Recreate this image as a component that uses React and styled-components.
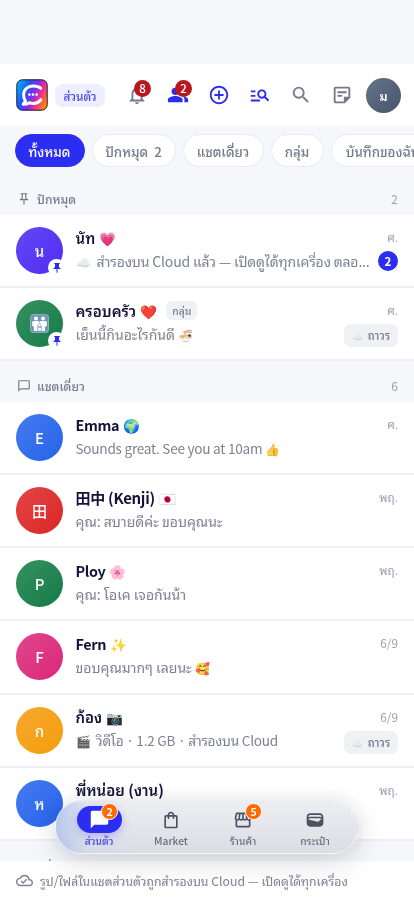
import React from 'react'
import styled, { createGlobalStyle } from 'styled-components'
import {
  MdAddCircleOutline,
  MdChatBubble,
  MdManageSearch,
  MdOutlineChatBubbleOutline,
  MdOutlineCloudDone,
  MdOutlineShoppingBag,
  MdOutlineNotifications,
  MdOutlinePushPin,
  MdOutlineStickyNote2,
  MdOutlineStorefront,
  MdPeopleAlt,
  MdPushPin,
  MdSearch,
  MdOutlineGroup,
  MdWallet,
} from 'react-icons/md'

const GlobalStyle = createGlobalStyle`
  * { box-sizing: border-box; }
  body {
    margin: 0;
    background: #f6f7fa;
    font-family: "Noto Sans CJK JP", "Noto Sans Thai Looped", "Noto Sans Thai", "Noto Sans", sans-serif;
    color: #13133a;
  }
`
const Screen = styled.div`
  width: 414px;
  height: 900px;
  padding-top: 64px;
  display: flex;
  flex-direction: column;
  overflow: hidden;
  position: relative;
`
const Header = styled.header`
  height: 62px;
  flex: none;
  background: #fff;
  display: flex;
  align-items: center;
  padding: 0 12px 0 16px;
`
const Mode = styled.span`
  width: 50px;
  height: 23px;
  margin: 0 11px 0 7px;
  border-radius: 8px;
  background: #eeeffe;
  color: #4a46e8;
  font-size: 11.8px;
  font-weight: 500;
  line-height: 23px;
  text-align: center;
  white-space: nowrap;
`
const Action = styled.span`
  width: 41px;
  height: 40px;
  display: flex;
  align-items: center;
  justify-content: center;
  position: relative;
  font-size: 22px;
  color: ${p => (p.$active ? '#2b2df0' : '#737a89')};
`
const ActionBadge = styled.span`
  position: absolute;
  left: 18px;
  top: 5px;
  width: 17px;
  height: 17px;
  border-radius: 50%;
  background: #b91720;
  color: #fff;
  font-size: 11.5px;
  font-weight: 500;
  line-height: 17px;
  text-align: center;
`
const Me = styled.span`
  width: 35px;
  height: 35px;
  margin-left: 4px;
  border-radius: 50%;
  background: linear-gradient(135deg, #64748b, #475569);
  color: #fff;
  font-size: 12.5px;
  font-weight: 600;
  line-height: 35px;
  text-align: center;
`
const Filters = styled.nav`
  height: 48px;
  flex: none;
  display: flex;
  gap: 7px;
  padding: 8px 0 0 14.5px;
  overflow: hidden;
`
const Chip = styled.span`
  flex: none;
  width: ${p => p.$width}px;
  height: 33px;
  border: 1.5px solid ${p => (p.$on ? '#2b2df0' : '#e8eaf0')};
  border-radius: 17px;
  background: ${p => (p.$on ? '#2b2df0' : '#fff')};
  color: ${p => (p.$on ? '#fff' : '#737a89')};
  font-size: 13.3px;
  font-weight: 500;
  line-height: 33px;
  text-align: center;
  white-space: pre;
`
const SectionHead = styled.div`
  height: 41px;
  flex: none;
  display: flex;
  align-items: center;
  padding: 8px 16px 0 17px;
  font-size: 12.1px;
  font-weight: 500;
  line-height: 20px;
  color: #737a89;

  svg { font-size: 14px; margin-right: 6px; }
`
const Count = styled.span`
  margin-left: auto;
  font-size: 12px;
  font-weight: 400;
  color: #989fae;
`
const Row = styled.div`
  height: 73.1px;
  flex: none;
  display: flex;
  padding: 0 16px;
  background: #fff;
  border-bottom: 2px solid #eff0f4;
`
const Avatar = styled.div`
  width: 47px;
  height: 47px;
  flex: none;
  margin: 12px 12.5px 0 0;
  border-radius: 50%;
  background: linear-gradient(135deg, ${p => p.$from}, ${p => p.$to});
  color: #fff;
  font-size: 15px;
  font-weight: 500;
  line-height: 47px;
  text-align: center;
  position: relative;

  > svg { display: block; margin: 14px auto 0; }
`
const PinBadge = styled.span`
  position: absolute;
  right: -2px;
  bottom: -2px;
  width: 17px;
  height: 17px;
  border-radius: 50%;
  background: #fff;
  color: #2b2df0;
  font-size: 12px;
  display: flex;
  align-items: center;
  justify-content: center;
`
const Body = styled.div`
  flex: 1;
  min-width: 0;
  padding-top: 10.8px;
`
const Name = styled.div`
  display: flex;
  align-items: center;
  height: 24px;
  font-size: ${p => p.$size || 15}px;
  letter-spacing: ${p => p.$track || 0}px;
  font-weight: 600;
  line-height: 24px;
  white-space: pre;
`
const NameEmoji = styled.span`
  margin-left: 4px;
  font-size: 13.5px;
  font-weight: 400;
  letter-spacing: 0;
`
const GroupTag = styled.span`
  height: 19px;
  margin-left: 9px;
  padding: 0 6px;
  border-radius: 6px;
  background: #f0f1f5;
  color: #737a89;
  font-size: 10.3px;
  font-weight: 500;
  line-height: 19px;
`
const Preview = styled.div`
  height: 24px;
  margin-top: -1px;
  font-size: ${p => p.$size || 14}px;
  letter-spacing: ${p => p.$track || 0}px;
  line-height: 24px;
  color: #7c8291;
  white-space: pre;
`
const SmallEmoji = styled.span`
  font-size: 12px;
  letter-spacing: 0;
  opacity: 0.85;
`
const Side = styled.div`
  flex: none;
  padding-top: 13px;
  margin-left: 10px;
  display: flex;
  flex-direction: column;
  align-items: flex-end;
`
const Time = styled.span`
  height: 18px;
  font-size: 11.8px;
  line-height: 18px;
  color: #989fae;
`
const Unread = styled.span`
  width: 20px;
  height: 20px;
  margin-top: 4.5px;
  border-radius: 50%;
  background: #2b2df0;
  color: #fff;
  font-size: 11.5px;
  font-weight: 700;
  line-height: 20px;
  text-align: center;
`
const Kept = styled.span`
  width: 54px;
  height: 23px;
  margin-top: 5px;
  border-radius: 7px;
  background: #f0f1f5;
  color: #737a89;
  font-size: 11.4px;
  font-weight: 500;
  line-height: 23px;
  text-align: center;
  white-space: pre;

  > span { font-size: 9px; }
`
const Footer = styled.footer`
  position: absolute;
  left: 0;
  right: 0;
  bottom: 0;
  height: 39px;
  background: #fff;
  display: flex;
  align-items: center;
  gap: 7px;
  padding: 0 16px;
  color: #7c8291;
  font-size: 12.25px;
  white-space: nowrap;

  svg { font-size: 17px; flex: none; }
`
const TabBar = styled.nav`
  position: absolute;
  left: 55px;
  top: 800px;
  width: 304px;
  height: 54px;
  border: 1px solid rgba(255, 255, 255, 0.5);
  border-radius: 27px;
  background:
    linear-gradient(90deg, rgba(140, 170, 235, 0.5), rgba(190, 205, 240, 0.25) 10%, rgba(220, 222, 232, 0) 26%),
    linear-gradient(180deg, rgba(232, 233, 238, 0.78), rgba(214, 215, 223, 0.84));
  backdrop-filter: blur(14px) saturate(1.4);
  box-shadow: 0 8px 28px rgba(30, 32, 60, 0.16), 0 0 20px rgba(30, 32, 60, 0.06);
  display: flex;
  padding: 5px 7px 0;
`
const Tab = styled.div`
  flex: 1;
  display: flex;
  flex-direction: column;
  align-items: center;
  color: ${p => (p.$on ? '#4a46e8' : '#686f7e')};
  font-size: 10.2px;
  font-weight: 500;
  line-height: 14px;
  white-space: nowrap;
`
const TabIcon = styled.div`
  width: 45px;
  height: 27px;
  margin-bottom: 0.5px;
  border-radius: 14px;
  background: ${p => (p.$on ? '#2b2df0' : 'transparent')};
  box-shadow: ${p => (p.$on ? '0 3px 8px rgba(43, 45, 240, 0.25)' : 'none')};
  color: ${p => (p.$on ? '#fff' : '#4b5363')};
  font-size: ${p => (p.$on ? 21 : 20)}px;
  display: flex;
  align-items: center;
  justify-content: center;
  position: relative;
`
const TabBadge = styled.span`
  position: absolute;
  left: 24.5px;
  top: -3px;
  width: 17px;
  height: 17px;
  border: 1px solid #fff;
  border-radius: 50%;
  background: #ff6a00;
  color: #fff;
  font-size: 10.5px;
  font-weight: 700;
  line-height: 15px;
  text-align: center;
`

const Logo = () => (
  <svg width="32" height="32" viewBox="0 0 32 32">
    <defs>
      <linearGradient id="logoBg" x1="0" y1="0.25" x2="1" y2="0.7">
        <stop offset="0" stopColor="#00aaff" />
        <stop offset="0.3" stopColor="#2355f5" />
        <stop offset="0.52" stopColor="#7a2ff0" />
        <stop offset="0.75" stopColor="#f32d91" />
        <stop offset="1" stopColor="#ff8a00" />
      </linearGradient>
    </defs>
    <rect x="0.8" y="0.8" width="30.4" height="30.4" rx="5.5" fill="url(#logoBg)" stroke="#151a3c" strokeWidth="1" />
    <path
      d="M24.7 9.2C22.8 7.4 20.2 6.9 17.2 6.9C11.5 6.9 7.6 10.8 7.6 15.8C7.6 18.5 8.3 20.5 9.5 22L7.2 25.2C12 25.4 12.2 24.1 13.5 23.7C18.2 25.4 22.2 24 24.8 20.7"
      fill="none" stroke="#fff" strokeWidth="3" strokeLinejoin="round" strokeLinecap="round"
    />
    <circle cx="13.4" cy="15.6" r="1.3" fill="#fff" />
    <circle cx="17" cy="15.6" r="1.3" fill="#fff" />
    <circle cx="20.6" cy="15.6" r="1.3" fill="#fff" />
  </svg>
)

// two grown-ups with a child between them
const Family = () => (
  <svg width="19" height="19" viewBox="0 0 19 19">
    <rect x="0.4" y="0.4" width="18.2" height="18.2" rx="3.4" fill="#7396b8" stroke="#a3bdd2" strokeWidth="0.8" />
    <g fill="#fff">
      <circle cx="6" cy="4.4" r="2" />
      <circle cx="13" cy="4.4" r="2" />
      <path d="M2.2 8.2Q2.2 6.9 3.6 6.9H8.2Q9.3 6.9 9.4 8.4V10.3L7.5 12V17H3.9V12.6L2.2 12Z" />
      <path d="M16.8 8.2Q16.8 6.9 15.4 6.9H10.8Q9.7 6.9 9.6 8.4V10.3L11.5 12V17H15.1V12.6L16.8 12Z" />
      <circle cx="9.5" cy="11.2" r="1.6" stroke="#7396b8" strokeWidth="0.5" />
      <path d="M7.7 13.4H11.3V17H7.7Z" stroke="#7396b8" strokeWidth="0.4" />
    </g>
  </svg>
)

const blue = ['#467bee', '#2563eb']
const green = ['#36925f', '#147a47']

const pinned = [
  { initial: 'น', colors: ['#6348f4', '#4f2cf2'], name: 'นัท', emoji: '💗', lead: '☁️', preview: '  สำรองบน Cloud แล้ว — เปิดดูได้ทุกเครื่อง ตลอ...', track: -0.16, time: 'ศ.', unread: 2, pin: true },
  { initial: <Family />, colors: green, name: 'ครอบครัว', emoji: '❤️', group: true, preview: 'เย็นนี้กินอะไรกันดี ', tail: '🍜', time: 'ศ.', kept: true, pin: true },
]
const direct = [
  { initial: 'E', colors: blue, name: 'Emma', nameSize: 14.4, nameTrack: -0.35, emoji: '🌍', preview: 'Sounds great. See you at 10am ', size: 13.6, track: -0.25, tail: '👍', time: 'ศ.' },
  { initial: '田', colors: ['#e24646', '#dc2626'], name: '田中 (Kenji)', nameTrack: -0.3, emoji: '🇯🇵', preview: 'คุณ: สบายดีค่ะ ขอบคุณนะ', time: 'พฤ.' },
  { initial: 'P', colors: green, name: 'Ploy', nameSize: 14.4, nameTrack: -0.35, emoji: '🌸', preview: 'คุณ: โอเค เจอกันน้า', time: 'พฤ.' },
  { initial: 'F', colors: ['#e0468f', '#db2777'], name: 'Fern', nameSize: 14.4, nameTrack: -0.35, emoji: '✨', preview: 'ขอบคุณมากๆ เลยนะ ', tail: '🥰', time: '6/9' },
  { initial: 'ก', colors: ['#f6a82f', '#f59e0b'], name: 'ก้อง', emoji: '📷', lead: '🎬', preview: '  วิดีโอ · 1.2 GB · สำรองบน Cloud', size: 13.6, track: -0.24, time: '6/9', kept: true },
  { initial: 'ห', colors: blue, name: 'พี่หน่อย (งาน)', preview: '', time: 'พฤ.' },
]

const Chat = ({ chat }) => (
  <Row>
    <Avatar $from={chat.colors[0]} $to={chat.colors[1]}>
      {chat.initial}
      {chat.pin && <PinBadge><MdPushPin /></PinBadge>}
    </Avatar>
    <Body>
      <Name $size={chat.nameSize} $track={chat.nameTrack}>
        {chat.name}
        {chat.emoji && <NameEmoji>{chat.emoji}</NameEmoji>}
        {chat.group && <GroupTag>กลุ่ม</GroupTag>}
      </Name>
      <Preview $size={chat.size} $track={chat.track}>
        {chat.lead && <SmallEmoji>{chat.lead}</SmallEmoji>}
        {chat.preview}
        {chat.tail && <SmallEmoji>{chat.tail}</SmallEmoji>}
      </Preview>
    </Body>
    <Side>
      <Time>{chat.time}</Time>
      {chat.unread && <Unread>{chat.unread}</Unread>}
      {chat.kept && <Kept><SmallEmoji>☁️</SmallEmoji>  ถาวร</Kept>}
    </Side>
  </Row>
)

export default function App() {
  return (
    <Screen>
      <GlobalStyle />
      <Header>
        <Logo />
        <Mode>ส่วนตัว</Mode>
        <Action><MdOutlineNotifications /><ActionBadge>8</ActionBadge></Action>
        <Action $active><MdPeopleAlt /><ActionBadge>2</ActionBadge></Action>
        <Action $active><MdAddCircleOutline /></Action>
        <Action $active><MdManageSearch /></Action>
        <Action><MdSearch /></Action>
        <Action><MdOutlineStickyNote2 /></Action>
        <Me>ม</Me>
      </Header>
      <Filters>
        <Chip $on $width={70}>ทั้งหมด</Chip>
        <Chip $width={84}>ปักหมุด  2</Chip>
        <Chip $width={81}>แชตเดี่ยว</Chip>
        <Chip $width={53}>กลุ่ม</Chip>
        <Chip $width={104}>บันทึกของฉัน</Chip>
      </Filters>

      <SectionHead><MdOutlinePushPin />ปักหมุด<Count>2</Count></SectionHead>
      {pinned.map(c => <Chat key={c.name} chat={c} />)}

      <SectionHead><MdOutlineChatBubbleOutline />แชตเดี่ยว<Count>6</Count></SectionHead>
      {direct.map(c => <Chat key={c.name} chat={c} />)}

      <SectionHead><MdOutlineGroup />กลุ่ม</SectionHead>

      <Footer>
        <MdOutlineCloudDone />
        รูป/ไฟล์ในแชตส่วนตัวถูกสำรองบน Cloud — เปิดดูได้ทุกเครื่อง
      </Footer>
      <TabBar>
        <Tab $on><TabIcon $on><MdChatBubble /><TabBadge>2</TabBadge></TabIcon>ส่วนตัว</Tab>
        <Tab><TabIcon><MdOutlineShoppingBag /></TabIcon>Market</Tab>
        <Tab><TabIcon><MdOutlineStorefront /><TabBadge>5</TabBadge></TabIcon>ร้านค้า</Tab>
        <Tab><TabIcon><MdWallet /></TabIcon>กระเป๋า</Tab>
      </TabBar>
    </Screen>
  )
}
